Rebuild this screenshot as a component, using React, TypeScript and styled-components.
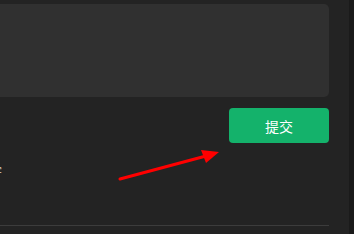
import React from 'react'
import styled, { createGlobalStyle } from 'styled-components'

const Global = createGlobalStyle`
  html, body { margin: 0; padding: 0; background: #232323; }
  body { font-family: "Noto Sans CJK SC", "Liberation Sans", sans-serif; }
`

const Page = styled.div`
  position: relative;
  display: flex;
  width: 354px;
  height: 234px;
  overflow: hidden;
  background: #232323;
`

const Main = styled.div`
  flex: 1;
  display: flex;
  flex-direction: column;
  padding: 4px 20px 0 0;
`

const Rail = styled.div`
  width: 5px;
  background: #1a1a1a;
`

const Editor = styled.div`
  margin-left: -10px;
  height: 93px;
  border-radius: 5px;
  background: #303030;
`

const Actions = styled.div`
  display: flex;
  justify-content: flex-end;
  margin-top: 11px;
`

const Submit = styled.button`
  width: 100px;
  height: 35px;
  padding: 0;
  border: none;
  border-radius: 4px;
  background: #14b26b;
  color: #fff;
  font-family: "Noto Sans CJK SC", sans-serif;
  font-size: 14px;
  font-weight: 400;
  cursor: pointer;
`

const Label = styled.div`
  height: 14px;
  margin-top: 21px;
  overflow: hidden;
  font-size: 11px;
  line-height: 14px;
  color: #e6d6c0;
  span { display: inline-block; margin-left: -9px; }
`

const Divider = styled.div`
  margin-top: 47px;
  height: 1px;
  background: #3c3c3c;
`

const Arrow = styled.svg`
  position: absolute;
  left: 0;
  top: 0;
  pointer-events: none;
`

export default function App() {
  return (
    <>
      <Global />
      <Page>
        <Main>
          <Editor />
          <Actions>
            <Submit>提交</Submit>
          </Actions>
          <Label><span>字</span></Label>
          <Divider />
        </Main>
        <Rail />
        <Arrow width="354" height="234" viewBox="0 0 354 234">
          <line x1="120" y1="179" x2="206" y2="156" stroke="#ff0000" strokeWidth="3" strokeLinecap="round" />
          <polygon points="219,152 201,150 206,163" fill="#ff0000" />
        </Arrow>
      </Page>
    </>
  )
}
